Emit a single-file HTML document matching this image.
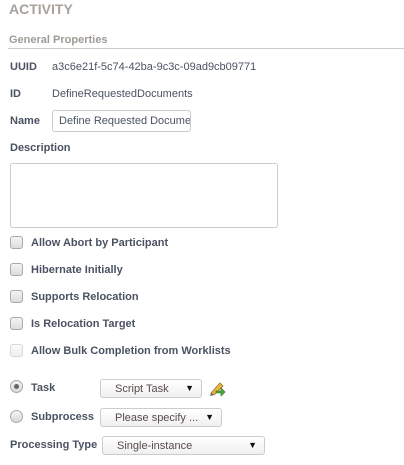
<html><head><style>
body{margin:0;width:404px;height:465px;background:#fff;font-family:"Liberation Sans",sans-serif;color:#4a5262;position:relative;overflow:hidden}
.a{position:absolute;white-space:nowrap}
.b{font-weight:bold;font-size:11px}
.t{font-size:11px}
.cb{position:absolute;left:10px;width:11px;height:11px;border:1px solid #aaa;border-radius:3px;background:linear-gradient(#f4f4f4,#dcdcdc)}
.sel{position:absolute;border:1px solid #ccc;border-radius:3px;background:linear-gradient(#fff,#f0f0f0);font-size:11px;color:#5a4a4a;box-sizing:border-box;padding:3px 0 0 14px}
.sel span{position:absolute;right:7px;top:3px;font-size:9px;color:#111}
.rd{position:absolute;left:10px;width:11px;height:11px;border:1px solid #aaa;border-radius:50%;background:linear-gradient(#f4f4f4,#d8d8d8)}
</style></head><body>
<div class="a" style="left:9px;top:1px;font-size:14px;font-weight:bold;color:#a8a19a">ACTIVITY</div>
<div class="a b" style="left:9px;top:34px;color:#a09a95">General Properties</div>
<div class="a" style="left:8px;top:48px;width:396px;height:1px;background:#ccc"></div>
<div class="a b" style="left:10px;top:61px">UUID</div>
<div class="a t" style="left:52px;top:61px">a3c6e21f-5c74-42ba-9c3c-09ad9cb09771</div>
<div class="a b" style="left:10px;top:88px">ID</div>
<div class="a t" style="left:52px;top:88px">DefineRequestedDocuments</div>
<div class="a b" style="left:10px;top:115px">Name</div>
<div class="a t" style="left:52px;top:110px;width:139px;height:22px;border:1px solid #ccc;border-radius:3px;box-sizing:border-box;padding:4px 0 0 6px;overflow:hidden">Define Requested Docume</div>
<div class="a b" style="left:10px;top:142px">Description</div>
<div class="a" style="left:10px;top:163px;width:268px;height:65px;border:1px solid #ccc;border-radius:3px;box-sizing:border-box"></div>
<div class="cb" style="top:236px"></div><div class="a b" style="left:31px;top:237px">Allow Abort by Participant</div>
<div class="cb" style="top:263px"></div><div class="a b" style="left:31px;top:264px">Hibernate Initially</div>
<div class="cb" style="top:290px"></div><div class="a b" style="left:31px;top:291px">Supports Relocation</div>
<div class="cb" style="top:317px"></div><div class="a b" style="left:31px;top:318px">Is Relocation Target</div>
<div class="cb" style="top:344px;opacity:.45"></div><div class="a b" style="left:31px;top:345px">Allow Bulk Completion from Worklists</div>
<div class="rd" style="top:380px"><div style="position:absolute;left:3px;top:3px;width:5px;height:5px;border-radius:50%;background:#666"></div></div>
<div class="a b" style="left:31px;top:382px">Task</div>
<div class="sel" style="left:100px;top:379px;width:102px;height:19px">Script Task<span>▼</span></div>
<svg class="a" style="left:208px;top:380px" width="18" height="18" viewBox="0 0 18 18"><path d="M3 13 L12 3 L15 6 L6 15 Z" fill="#e8b840" stroke="#a07020" stroke-width=".8"/><path d="M3 13 L2 16 L6 15Z" fill="#666"/><path d="M8 11 h5 v-3 l4 4 -4 4 v-3 h-5z" fill="#4caa3c" stroke="#2d7020" stroke-width=".6"/></svg>
<div class="rd" style="top:410px"></div>
<div class="a b" style="left:31px;top:411px">Subprocess</div>
<div class="sel" style="left:100px;top:408px;width:122px;height:19px">Please specify ...<span>▼</span></div>
<div class="a b" style="left:10px;top:439px">Processing Type</div>
<div class="sel" style="left:102px;top:436px;width:163px;height:19px">Single-instance<span>▼</span></div>
</body></html>
